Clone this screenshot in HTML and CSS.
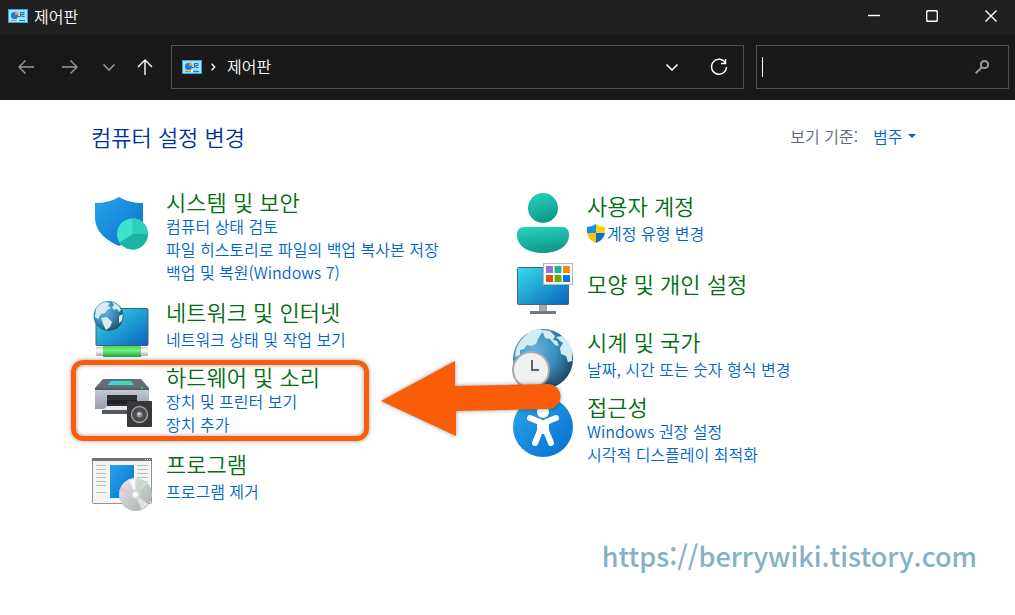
FILE: index.html
```html
<!DOCTYPE html>
<html lang="ko">
<head>
<meta charset="utf-8">
<title>제어판</title>
<link rel="stylesheet" href="styles.css">
</head>
<body>
<svg class="defs" width="0" height="0" aria-hidden="true">
  <defs>
    <linearGradient id="blue" x1="0" y1="0" x2="1" y2="1"><stop offset="0" stop-color="#2aa5ea"/><stop offset="1" stop-color="#0570cf"/></linearGradient>
    <linearGradient id="screen" x1="0" y1="0" x2="1" y2="1"><stop offset="0" stop-color="#38dcea"/><stop offset="1" stop-color="#0763bd"/></linearGradient>
    <linearGradient id="teal" x1="0" y1="0" x2=".3" y2="1"><stop offset="0" stop-color="#29d3c0"/><stop offset="1" stop-color="#109b8b"/></linearGradient>
    <linearGradient id="metal" x1="0" y1="0" x2="0" y2="1"><stop offset="0" stop-color="#c9ced6"/><stop offset="1" stop-color="#959ca8"/></linearGradient>
    <linearGradient id="cable" x1="0" y1="0" x2="0" y2="1"><stop offset="0" stop-color="#4fd160"/><stop offset=".4" stop-color="#6cf67c"/><stop offset="1" stop-color="#25a044"/></linearGradient>
    <linearGradient id="plug" x1="0" y1="0" x2="0" y2="1"><stop offset="0" stop-color="#d0d0d0"/><stop offset=".4" stop-color="#fff"/><stop offset="1" stop-color="#a9a9a9"/></linearGradient>
    <linearGradient id="disc" x1="0" y1="0" x2="1" y2="1"><stop offset="0" stop-color="#eceeee"/><stop offset=".5" stop-color="#c5c9ca"/><stop offset="1" stop-color="#a9adae"/></linearGradient>
    <radialGradient id="ocean" cx=".35" cy=".35" r=".75"><stop offset="0" stop-color="#62b5dc"/><stop offset=".5" stop-color="#3b8fbd"/><stop offset="1" stop-color="#1b4055"/></radialGradient>
    <symbol id="panel" viewBox="0 0 20 14">
      <rect width="20" height="14" fill="#25aee9"/><rect x="1" y="1" width="18" height="12" fill="#a5dffa"/>
      <circle cx="6.500" cy="6.500" r="3.500" fill="#147bd0"/><path d="M7 6V2.500A3.500 3.500 0 0 1 10.500 6z" fill="#f39419"/>
      <path d="M10 7.500h2.500v-4H16M12.500 5.500H14M16 3.500v2h-2v2h2.500" fill="none" stroke="#1768ad" stroke-width=".900"/>
      <path d="M3 11.500h6" stroke="#f08a13"/><path d="M9 11.500h2" stroke="#fff"/><path d="M11 11.500h6" stroke="#137ad2"/>
    </symbol>
    <symbol id="chevron" viewBox="0 0 14 8"><path d="M1.500 1.500 7 7l5.500-5.500" fill="none" stroke="currentColor" stroke-width="1.600"/></symbol>
  </defs>
</svg>

<header class="titlebar">
  <svg class="panel-icon"><use href="#panel"/></svg>
  <h1 class="title">제어판</h1>
  <div class="window-buttons">
    <button aria-label="최소화"><svg width="12" height="12"><path d="M0 5.500h12"/></svg></button>
    <button aria-label="최대화"><svg width="12" height="12"><rect x=".700" y=".700" width="10.600" height="10.600" rx="1"/></svg></button>
    <button aria-label="닫기"><svg width="12" height="12"><path d="m.500.500 11 11m0-11-11 11"/></svg></button>
  </div>
</header>

<nav class="toolbar">
  <div class="nav-buttons">
    <button class="dim" aria-label="뒤로"><svg width="18" height="16"><path d="M17 8H2M8.500 1.500 2 8l6.500 6.500"/></svg></button>
    <button class="dim" aria-label="앞으로"><svg width="18" height="16"><path d="M1 8h15M9.500 1.500 16 8l-6.500 6.500"/></svg></button>
    <button class="dim small" aria-label="최근 위치"><svg width="14" height="8"><use href="#chevron"/></svg></button>
    <button class="up" aria-label="위로"><svg width="16" height="18"><path d="M8 17V2M1 9l7-7 7 7"/></svg></button>
  </div>
  <div class="address">
    <svg class="panel-icon"><use href="#panel"/></svg>
    <svg class="crumb-arrow" width="5" height="8"><path d="m.700.700 3 3.300-3 3.300"/></svg>
    <button class="crumb">제어판</button>
    <button class="address-button" aria-label="이전 위치"><svg width="14" height="8"><use href="#chevron"/></svg></button>
    <button class="address-button" aria-label="새로 고침"><svg width="18" height="18"><path d="M15.500 5A7.500 7.500 0 1 0 16.500 9M15.500 1v4.500H11"/></svg></button>
  </div>
  <label class="search">
    <input type="text" aria-label="제어판 검색">
    <span class="caret"></span>
    <svg width="14" height="14"><circle cx="9.500" cy="4.500" r="3.600"/><path d="M7 7 .800 13.200"/></svg>
  </label>
</nav>

<main class="content">
  <div class="heading">
    <h2>컴퓨터 설정 변경</h2>
    <div class="view">
      <label for="view">보기 기준:</label>
      <select id="view"><option>범주</option></select>
      <svg width="8" height="4"><path d="M0 0h8L4 4z"/></svg>
    </div>
  </div>

  <div class="columns">
    <div class="column">
      <section class="item">
        <svg class="icon" viewBox="0 0 60 60">
          <path d="M4 14q14 0 24-6 10 6 24 6v18c0 14-13 20-24 25C17 52 4 44 4 28z" fill="url(#blue)"/>
          <circle cx="41.500" cy="45" r="15.500" fill="#3ee3cf"/>
          <path d="M41.500 45V29.500A15.500 15.500 0 0 1 57 45z" fill="#2fcfbb"/><path d="M41.500 45H57A15.500 15.500 0 0 1 28.500 53.500z" fill="#1bb4a3"/><path d="M41.500 45V29.500A15.500 15.500 0 0 1 57 45z" fill="#2fcfbb"/>
        </svg>
        <div class="text">
          <h3><a href="#">시스템 및 보안</a></h3>
          <a href="#">컴퓨터 상태 검토</a><a href="#">파일 히스토리로 파일의 백업 복사본 저장</a><a href="#">백업 및 복원(Windows 7)</a>
        </div>
      </section>

      <section class="item single">
        <svg class="icon" viewBox="0 0 60 60">
          <rect x="5" y="9.500" width="52" height="37" rx="1" fill="url(#screen)" stroke="#42627a"/>
          <rect x="5" y="48" width="52" height="9" rx="1" fill="url(#plug)"/><rect x="12" y="47" width="38" height="11" fill="url(#cable)"/>
          <circle cx="17.500" cy="17" r="15" fill="url(#ocean)"/>
          <path d="M5 10q3-6 10-7l4 1-2 3 3 2-4 2-2 3-4 1-3 5-3-2z" fill="#d3ecf4"/><path d="M21 3q7 2 9 8l-2 2-2-3-3 1-2-3 2-2zM10 19l6-1 5 5-2 5-4 3-3-6zM28 17l4-2-1 7-3 2z" fill="#d3ecf4"/>
        </svg>
        <div class="text">
          <h3><a href="#">네트워크 및 인터넷</a></h3>
          <a href="#">네트워크 상태 및 작업 보기</a>
        </div>
      </section>

      <section class="item marked">
        <svg class="icon" viewBox="0 0 60 60">
          <path d="M12 15h38l8 9H4z" fill="#666d75"/><path d="M20 17h20l3 4H17z" fill="#42dcae"/><path d="M20 17h9l-1 4H17z" fill="#39d5ea"/>
          <path d="M4 24h54v21H4z" fill="url(#metal)"/><path d="M4 24h54v2H4z" fill="#555b63"/><circle cx="51" cy="24" r="1" fill="#3fe043"/>
          <path d="M16 31h30v15H16z" fill="#303236"/><path d="M16 36h30v4H16z" fill="#1e2023"/><path d="M16 42h24v4H12z" fill="#e7e8ea"/><path d="M11 46h30v4H11z" fill="#55585e"/>
          <rect x="36" y="37" width="25" height="26" rx="1" fill="#393838"/><circle cx="48.500" cy="50.500" r="8" fill="#494b4e" stroke="#a6aaae" stroke-width="1.300"/><circle cx="48.500" cy="50.500" r="3" fill="#8e969d"/><circle cx="48" cy="50" r="1.200" fill="#dce3e8"/>
        </svg>
        <div class="text">
          <h3><a href="#">하드웨어 및 소리</a></h3>
          <a href="#">장치 및 프린터 보기</a><a href="#">장치 추가</a>
        </div>
        <svg class="arrow" viewBox="0 0 190 86" aria-hidden="true"><path d="M4 45 78 5v25l93-2a12.500 12.500 0 0 1 0 25l-92 2v25z"/></svg>
      </section>

      <section class="item single">
        <svg class="icon" viewBox="0 0 60 60">
          <rect x="1.500" y="7.500" width="59" height="45" rx="1" fill="#f5f5f5" stroke="#929292"/><path d="M1 7h60v3H1z" fill="#777171"/><path d="M54 8.500h5" stroke="#ddd" stroke-dasharray="1 1"/>
          <path d="M5 14.500h10M5 18.500h10M5 22.500h10M5 26.500h10M5 30.500h10M5 34.500h10M5 41.500h10M46 14.500h11M46 18.500h11M46 22.500h11M46 26.500h11M46 30.500h11" stroke="#bbb"/>
          <path d="M19 14h24v33H19z" fill="url(#blue)"/>
          <circle cx="44.500" cy="43.500" r="16.500" fill="url(#disc)"/>
          <path d="M44.500 43.500 30 36l-2 4z" fill="#e5bde2"/><path d="m44.500 43.500 9-14 3 3z" fill="#bceabe"/><path d="m44.500 43.500 6 15 7-5z" fill="#dfe1e1"/><path d="m44.500 43.500-7-15 7-1z" fill="#f5f6f6"/>
          <circle cx="44.500" cy="43.500" r="5" fill="#d4d7d8"/><circle cx="44.500" cy="43.500" r="2.500" fill="#fff"/>
        </svg>
        <div class="text">
          <h3><a href="#">프로그램</a></h3>
          <a href="#">프로그램 제거</a>
        </div>
      </section>
    </div>

    <div class="column right">
      <section class="item single">
        <svg class="icon" viewBox="0 0 60 60">
          <circle cx="31" cy="15" r="15" fill="url(#teal)"/><path d="M12 34h38q7 0 7 8c0 11-11 18-26 18S5 53 5 42q0-8 7-8z" fill="url(#teal)"/>
        </svg>
        <div class="text">
          <h3><a href="#">사용자 계정</a></h3>
          <a class="guarded" href="#"><svg width="18" height="19" viewBox="0 0 18 19"><path d="M9 0Q5 3 0 3v6h9z" fill="#1b91e0"/><path d="M9 0q4 3 9 3v6H9z" fill="#ffd20a"/><path d="M0 9q1 7 9 10V9z" fill="#fbc110"/><path d="M18 9q-1 7-9 10V9z" fill="#0873ce"/></svg>계정 유형 변경</a>
        </div>
      </section>

      <section class="item plain">
        <svg class="icon" viewBox="0 0 60 60">
          <path d="M27 47h8v7h-8z" fill="#a1a9b1"/><path d="M18 53h26v3H18z" fill="#717a83"/>
          <rect x="5.500" y="9.500" width="51" height="37" rx="1" fill="url(#screen)" stroke="#45667b"/>
          <rect x="31.500" y="5.500" width="29" height="21" fill="#fff" stroke="#b6b6b6"/>
          <path d="M34 8h7v7h-7z" fill="#9d70d0"/><path d="M42.500 8h7v7h-7z" fill="#18b5a5"/><path d="M51 8h7v7h-7z" fill="#f48b0b"/><path d="M34 17h7v7h-7z" fill="#e55012"/><path d="M42.500 17h7v7h-7z" fill="#57b40d"/><path d="M51 17h7v7h-7z" fill="#0878d5"/>
        </svg>
        <div class="text">
          <h3><a href="#">모양 및 개인 설정</a></h3>
        </div>
      </section>

      <section class="item single">
        <svg class="icon" viewBox="0 0 60 60">
          <circle cx="31" cy="30" r="30" fill="url(#ocean)"/>
          <path d="m10 10 7-7 10-3 5 2-3 3-3 5-2 5-5 2-4-1-3 4-4 1v5l-5 2q0-10 7-18z" fill="#d3ecf4"/><path d="m30 1 8 1 5 5-2 4 4 1 2 5-4-1-5-6-5-1zM48 12l-4-4 6-1q8 5 10 16v9l-4 1-2-6-5-2-1-6 3-5z" fill="#d3ecf4"/>
          <circle cx="19" cy="41" r="18" fill="#f0f0f1" stroke="#a8a9ab" stroke-width="2"/><path d="M20 31v10h7" fill="none" stroke="#626467" stroke-width="2"/>
        </svg>
        <div class="text">
          <h3><a href="#">시계 및 국가</a></h3>
          <a href="#">날짜, 시간 또는 숫자 형식 변경</a>
        </div>
      </section>

      <section class="item">
        <svg class="icon" viewBox="0 0 60 60">
          <circle cx="31" cy="33" r="30" fill="url(#blue)"/><circle cx="31" cy="18" r="6" fill="#fff"/>
          <path d="m18 24 10 4v9l-5 12M44 24l-10 4v9l5 12" fill="none" stroke="#fff" stroke-width="6" stroke-linecap="round" stroke-linejoin="round"/><path d="M26 26h10v14H26z" fill="#fff"/>
        </svg>
        <div class="text">
          <h3><a href="#">접근성</a></h3>
          <a href="#">Windows 권장 설정</a><a href="#">시각적 디스플레이 최적화</a>
        </div>
      </section>
    </div>
  </div>
  <p class="site">https://berrywiki.tistory.com</p>
</main>
</body>
</html>
```
FILE: styles.css
```css
*, *::after { box-sizing: border-box; }
body {
  margin: 0;
  background: #fff;
  font-family: "Noto Sans CJK KR", sans-serif;
  font-size: 16px;
  font-weight: 350;
}
h1, h2, h3, p { margin: 0; font-weight: inherit; }
a { text-decoration: none; color: #0066cc; }
button {
  display: flex;
  align-items: center;
  justify-content: center;
  padding: 0;
  border: 0;
  background: none;
  color: inherit;
  font: inherit;
}
.defs { position: absolute; }

.titlebar {
  display: flex;
  align-items: center;
  height: 35px;
  padding: 0 0 3px 8px;
  background: #202020;
  color: #fff;
}
.panel-icon { width: 20px; height: 14px; flex: none; }
.title { margin-left: 6px; font-size: 16px; line-height: 24px; }
.window-buttons { display: flex; margin-left: auto; align-self: stretch; }
.window-buttons button { width: 58px; }
.window-buttons button:last-child { width: 54px; padding-left: 6px; }
.window-buttons svg, .nav-buttons svg, .address svg, .search svg {
  fill: none;
  stroke: currentColor;
  stroke-width: 1.4;
}

.toolbar {
  display: flex;
  height: 65px;
  padding: 10px 6px 11px 12px;
  background: #191919;
  color: #fff;
}
.nav-buttons { display: flex; width: 159px; flex: none; }
.nav-buttons button { width: 44px; padding-right: 16px; }
.nav-buttons .small { width: 18px; padding: 0; }
.nav-buttons .up { width: 53px; padding: 0; }
.nav-buttons .dim { color: #999; }
.address {
  display: flex;
  align-items: center;
  flex: 1;
  min-width: 0;
  border: 1px solid #535353;
  padding: 0 12px 0 10px;
}
.panel-icon, .address .panel-icon { stroke: none; }
.crumb-arrow { margin-left: 9px; }
.crumb { margin: 0 auto 0 11px; padding-bottom: 2px; }
.address-button { width: 24px; height: 42px; }
.address-button + .address-button { margin-left: 23px; }
.search {
  position: relative;
  display: flex;
  align-items: center;
  width: 253px;
  flex: none;
  margin-left: 12px;
  padding-right: 19px;
  border: 1px solid #535353;
}
.search input {
  flex: 1;
  min-width: 0;
  padding: 0 8px;
  border: 0;
  outline: 0;
  background: none;
  color: #fff;
  font: inherit;
}
.search svg { color: #999; stroke-width: 2; }
.caret { position: absolute; left: 5px; top: 11px; width: 1px; height: 20px; background: #fff; }

.content { padding: 20px 38px 40px 91px; }
.heading {
  display: flex;
  align-items: center;
  justify-content: space-between;
  height: 32px;
  padding-right: 61px;
}
h2 { font-size: 22px; line-height: 32px; color: #003399; }
.view { display: flex; align-items: center; color: #5c6880; }
.view select {
  appearance: none;
  margin: 0 5px 0 15px;
  padding: 0;
  border: 0;
  background: none;
  color: #0066cc;
  font: inherit;
}
.view path { fill: #0066cc; }

.columns {
  display: grid;
  grid-template-columns: 1fr 1fr;
  margin: 37px 44px 0 0;
}
.column { display: flex; flex-direction: column; gap: 13px; }
.right { padding-top: 2px; }
.item { position: relative; display: flex; align-items: flex-start; }
.icon { width: 60px; height: 60px; margin: 0 15px -10px 0; flex: none; overflow: visible; }
.single .icon { margin-top: 2px; }
.text { display: flex; flex-direction: column; align-items: flex-start; white-space: nowrap; }
.text a { font-size: 16px; line-height: 23px; }
.text h3 { margin-bottom: 1px; }
.text h3 a { display: block; font-size: 22px; line-height: 25px; color: #006e12; }
.single .text { padding-top: 2px; }
.single h3 { margin-bottom: 4px; }
.plain { min-height: 56px; }
.plain .text { padding-top: 13px; }
.guarded { display: flex; align-items: center; gap: 2px; }

.marked::after {
  content: "";
  position: absolute;
  left: -20px;
  top: -4px;
  width: 298px;
  height: 81px;
  border: 5px solid #f95d0a;
  border-radius: 12px;
  box-shadow: 0 0 4px #0006, inset 0 0 4px #0006;
}
.arrow {
  position: absolute;
  z-index: 1;
  left: 286px;
  top: -8px;
  width: 190px;
  height: 86px;
  fill: #f95d0a;
  filter: drop-shadow(0 0 2px #0006);
}
.site {
  margin-top: 33px;
  text-align: right;
  font-size: 27px;
  line-height: 40px;
  font-weight: 500;
  color: #84b1c8;
}
```
